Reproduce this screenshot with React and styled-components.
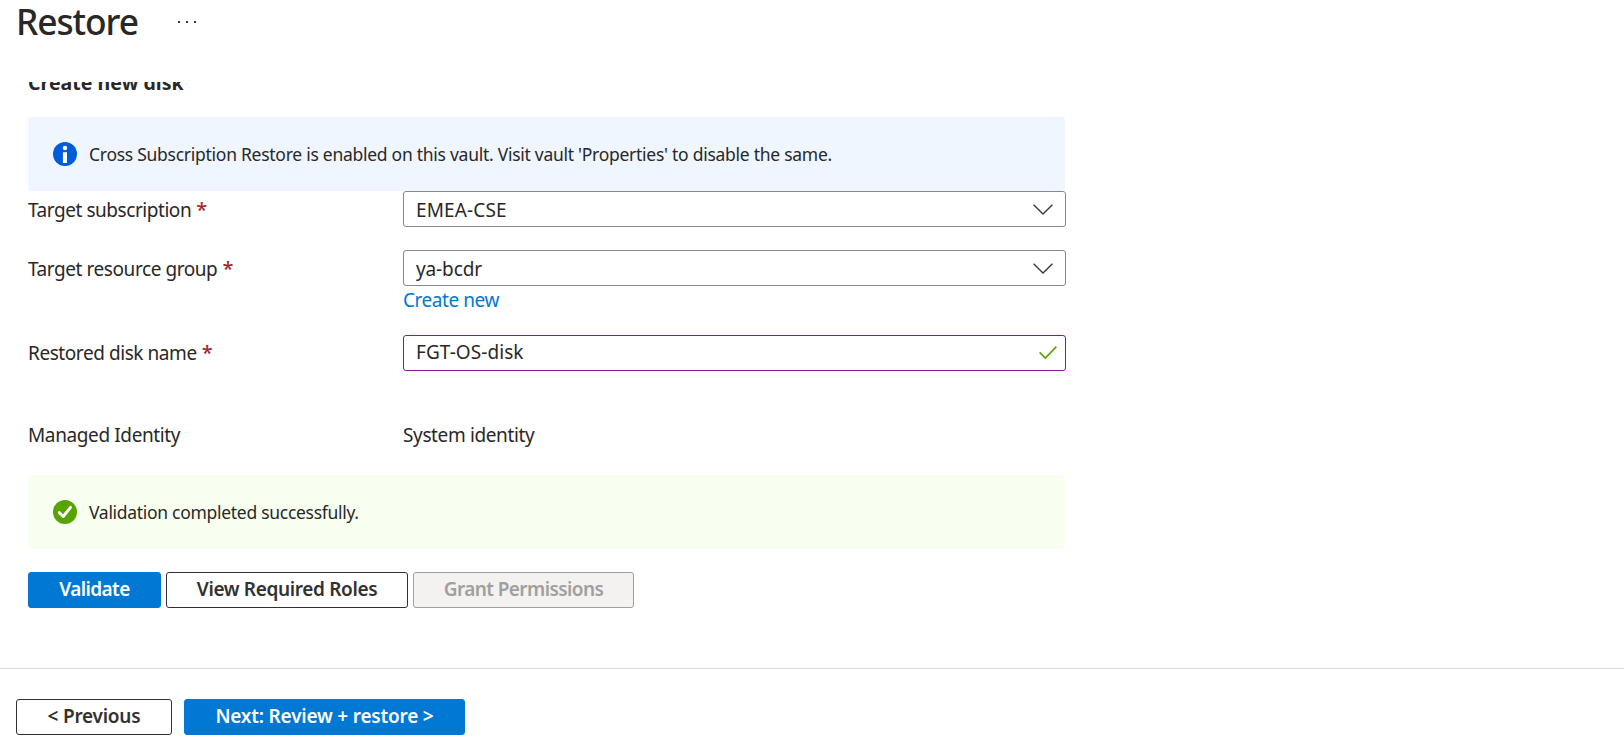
import React from 'react';
import styled, { createGlobalStyle, css } from 'styled-components';

const GlobalStyle = createGlobalStyle`
  *, *::before, *::after { box-sizing: border-box; }
  body {
    margin: 0;
    background: #fff;
    color: #292827;
    font-family: "Noto Sans", "Open Sans", sans-serif;
    font-size: 19px;
    overflow: hidden;
  }
`;

const Page = styled.main`
  display: flex;
  flex-direction: column;
  height: 750px;
`;

const Header = styled.header`
  display: flex;
  align-items: flex-start;
  flex: none;
  height: 82px;
  padding-left: 16px;
`;

const Title = styled.h1`
  margin: 0;
  width: 159px;
  font-size: 35.3px;
  font-weight: 500;
  line-height: 42px;
  letter-spacing: -1.05px;
`;

const MoreButton = styled.button`
  display: flex;
  gap: 6px;
  margin-top: 21px;
  padding: 0 3px;
  border: 0;
  background: none;
`;

const Dot = styled.span`
  width: 2px;
  height: 2px;
  background: #3b3a39;
`;

const Scroller = styled.section`
  flex: none;
  height: 586px;
  padding-left: 28px;
  overflow: hidden;
`;

const SectionTitle = styled.h2`
  margin: -14px 0 20px;
  font-size: 19.5px;
  font-weight: 700;
  line-height: 29px;
  letter-spacing: 0.04px;
`;

const Banner = styled.div`
  display: flex;
  align-items: center;
  gap: 12px;
  width: 1037px;
  height: 74px;
  padding-left: 25px;
  border-radius: 3px;
  font-size: 17.5px;
  background: ${(p) => (p.$kind === 'success' ? '#f8fff0' : '#eff6ff')};
  svg { flex: none; }
`;

const Text = styled.span`
  white-space: nowrap;
  letter-spacing: ${(p) => p.$track || 0}px;
`;

const FormRow = styled.div`
  display: grid;
  grid-template-columns: 375px 663px;
  align-items: start;
  margin-bottom: ${(p) => p.$after}px;
`;

const Label = styled.label`
  display: flex;
  gap: 5px;
  height: 36px;
  line-height: ${(p) => p.$line || 38}px;
`;

const Required = styled.span`
  color: #a4262c;
  font-size: 20px;
  font-weight: 500;
`;

const Field = styled.div`
  display: flex;
  align-items: center;
  justify-content: space-between;
  height: 36px;
  padding: 0 ${(p) => (p.$valid ? 8 : 12)}px 0 12px;
  border: 1px solid ${(p) => (p.$valid ? '#881798' : '#8a8886')};
  border-radius: 3px;
  background: #fff;
  ${Text} { padding: ${(p) => (p.$valid ? '0 0 2px' : '2px 0 0')}; }
`;

const Link = styled.a`
  display: block;
  height: 28px;
  line-height: 29px;
  color: #0078d4;
`;

const Value = styled.div`
  line-height: 36px;
`;

const buttonKinds = {
  primary: css`
    border-color: #0078d4;
    background: #0078d4;
    color: #fff;
  `,
  secondary: css`
    border-color: #323130;
    background: #fff;
    color: #323130;
  `,
  disabled: css`
    border-color: #a19f9d;
    background: #f3f2f1;
    color: #a19f9d;
  `,
};

const Button = styled.button`
  display: flex;
  align-items: center;
  justify-content: center;
  width: ${(p) => p.$width}px;
  height: 36px;
  padding: 0 0 3px;
  border: 1px solid;
  border-radius: 3px;
  font: inherit;
  font-weight: 600;
  ${(p) => buttonKinds[p.$kind]}
`;

const Actions = styled.div`
  display: flex;
  gap: 5px;
  margin-top: 23px;
`;

const Footer = styled.footer`
  display: flex;
  flex: 1;
  gap: 12px;
  padding: 30px 16px 0;
  border-top: 1px solid #dcdbda;
`;

const InfoIcon = () => (
  <svg width="24" height="24" viewBox="0 0 24 24">
    <circle cx="12" cy="12" r="12" fill="#015cda" />
    <circle cx="12" cy="6" r="2.2" fill="#fff" />
    <rect x="9.9" y="10.2" width="4.1" height="10.8" fill="#fff" />
  </svg>
);

const SuccessIcon = () => (
  <svg width="24" height="24" viewBox="0 0 24 24">
    <circle cx="12" cy="12" r="12" fill="#57a300" />
    <path d="M6.3 12.6 10.3 16.5 17.5 7.4" fill="none" stroke="#fff" strokeWidth="2.9" strokeLinecap="round" strokeLinejoin="round" />
  </svg>
);

const Chevron = () => (
  <svg width="20" height="11" viewBox="0 0 20 11">
    <path d="M.6.8 10 10 19.4.8" fill="none" stroke="#3b3a39" strokeWidth="1.4" />
  </svg>
);

const ValidMark = () => (
  <svg width="18" height="15" viewBox="0 0 18 15">
    <path d="M.6 6.4 6.3 12 17.4.6" fill="none" stroke="#57a300" strokeWidth="1.6" />
  </svg>
);

export default function App() {
  return (
    <>
      <GlobalStyle />
      <Page>
        <Header>
          <Title>Restore</Title>
          <MoreButton aria-label="More">
            <Dot /><Dot /><Dot />
          </MoreButton>
        </Header>
        <Scroller>
          <SectionTitle>Create new disk</SectionTitle>
          <Banner $kind="info">
            <InfoIcon />
            <Text $track={-0.27}>
              Cross Subscription Restore is enabled on this vault. Visit vault 'Properties' to disable the same.
            </Text>
          </Banner>
          <FormRow $after={23}>
            <Label><Text $track={-0.45}>Target subscription</Text><Required>*</Required></Label>
            <Field><Text $track={0.15}>EMEA-CSE</Text><Chevron /></Field>
          </FormRow>
          <FormRow $after={21}>
            <Label><Text $track={-0.43}>Target resource group</Text><Required>*</Required></Label>
            <div>
              <Field><Text $track={-0.12}>ya-bcdr</Text><Chevron /></Field>
              <Link><Text $track={-0.45}>Create new</Text></Link>
            </div>
          </FormRow>
          <FormRow $after={46}>
            <Label $line={36}><Text $track={-0.43}>Restored disk name</Text><Required>*</Required></Label>
            <Field $valid><Text $track={0.06}>FGT-OS-disk</Text><ValidMark /></Field>
          </FormRow>
          <FormRow $after={22}>
            <Label as="div" $line={36}><Text $track={-0.38}>Managed Identity</Text></Label>
            <Value><Text $track={-0.37}>System identity</Text></Value>
          </FormRow>
          <Banner $kind="success">
            <SuccessIcon />
            <Text $track={-0.295}>Validation completed successfully.</Text>
          </Banner>
          <Actions>
            <Button $kind="primary" $width={133}><Text $track={-0.6}>Validate</Text></Button>
            <Button $kind="secondary" $width={242}><Text $track={-0.36}>View Required Roles</Text></Button>
            <Button $kind="disabled" $width={221} disabled><Text $track={-0.59}>Grant Permissions</Text></Button>
          </Actions>
        </Scroller>
        <Footer>
          <Button $kind="secondary" $width={156}><Text $track={-0.22}>&lt; Previous</Text></Button>
          <Button $kind="primary" $width={281}><Text $track={-0.2}>Next: Review + restore &gt;</Text></Button>
        </Footer>
      </Page>
    </>
  );
}
